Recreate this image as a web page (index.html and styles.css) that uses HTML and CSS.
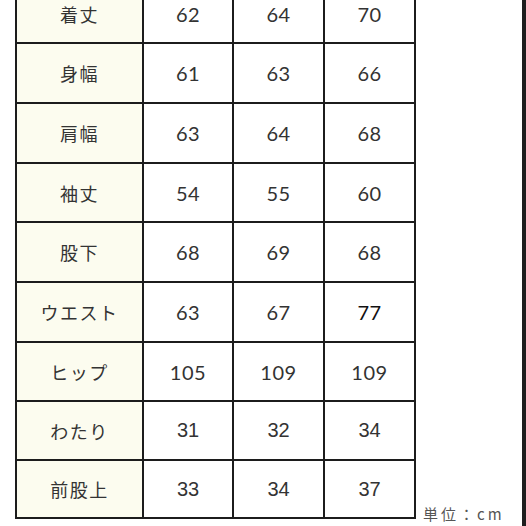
FILE: index.html
```html
<!DOCTYPE html>
<html lang="ja">
<head>
<meta charset="utf-8">
<link rel="stylesheet" href="styles.css">
</head>
<body>
<div class="page">
  <div class="size-table">
    <div class="label">着丈</div><div class="num">62</div><div class="num">64</div><div class="num">70</div>
    <div class="label">身幅</div><div class="num">61</div><div class="num">63</div><div class="num">66</div>
    <div class="label">肩幅</div><div class="num">63</div><div class="num">64</div><div class="num">68</div>
    <div class="label">袖丈</div><div class="num">54</div><div class="num">55</div><div class="num">60</div>
    <div class="label">股下</div><div class="num">68</div><div class="num">69</div><div class="num">68</div>
    <div class="label">ウエスト</div><div class="num">63</div><div class="num">67</div><div class="num dark">77</div>
    <div class="label">ヒップ</div><div class="num">105</div><div class="num">109</div><div class="num">109</div>
    <div class="label">わたり</div><div class="num arial">31</div><div class="num arial">32</div><div class="num arial">34</div>
    <div class="label">前股上</div><div class="num arial">33</div><div class="num arial">34</div><div class="num arial">37</div>
  </div>
  <div class="unit">単位：cm</div>
  <div class="spacer"></div>
  <div class="edge"></div>
</div>
</body>
</html>
```

FILE: styles.css
```css
html, body {
  margin: 0;
  padding: 0;
  background: #ffffff;
}
.page {
  width: 526px;
  height: 526px;
  overflow: hidden;
  display: flex;
  align-items: flex-start;
  background: #ffffff;
}
.size-table {
  margin-left: 15px;
  margin-top: -16px;
  display: grid;
  grid-template-columns: 125px 88px 89px 89px;
  grid-template-rows: 56px 58px 58px 57px 58px 58px 57px 57px 56px;
  gap: 2px;
  padding: 2px;
  background: #1c1c1c;
  flex-shrink: 0;
}
.label, .num {
  display: flex;
  align-items: center;
  justify-content: center;
  color: #333333;
}
.label {
  background: #fcfcef;
  font-family: "Noto Sans CJK JP", "Noto Sans", sans-serif;
  font-size: 18px;
  letter-spacing: 1.5px;
}
.num {
  background: #ffffff;
  font-family: Lato, "Noto Sans", sans-serif;
  font-size: 20px;
  font-weight: 400;
  letter-spacing: 0.5px;
}
.num.dark {
  color: #111111;
}
.num.arial {
  font-family: "Liberation Sans", Arial, sans-serif;
  font-size: 20px;
  letter-spacing: 0;
}
.unit {
  align-self: flex-end;
  margin-left: 7px;
  margin-bottom: 1px;
  font-family: "Noto Sans CJK JP", sans-serif;
  font-size: 15px;
  line-height: 22px;
  letter-spacing: 3px;
  color: #555555;
  white-space: nowrap;
}
.spacer {
  flex: 1;
}
.edge {
  width: 4px;
  height: 526px;
  background: #1e1e1e;
  flex-shrink: 0;
}
```
